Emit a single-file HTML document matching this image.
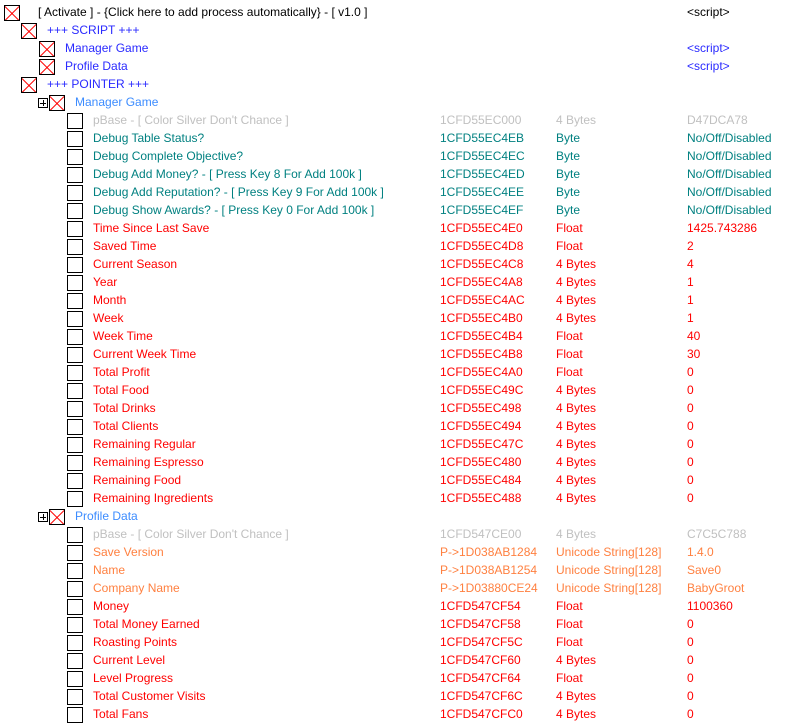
<!DOCTYPE html>
<html><head><meta charset="utf-8"><style>
body{margin:0;width:787px;height:722px;background:#fff;font-family:"Liberation Sans",sans-serif;font-size:12px;overflow:hidden;position:relative}
.r{position:absolute;left:0;width:787px;height:18px;line-height:18px;white-space:nowrap}
.r span{position:absolute;top:0}
.cb{position:absolute;top:2px;width:14px;height:14px;border:1px solid #000;background:#fff;box-sizing:content-box}
.x{position:absolute;top:2px;width:14px;height:14px;border:1px solid #000;box-sizing:content-box;overflow:hidden}
.x:before,.x:after{content:"";position:absolute;left:-3px;top:7px;width:20px;height:1px;background:#f00;transform:rotate(45deg)}
.x:after{transform:rotate(-45deg)}
.pl{position:absolute;top:5px;width:8px;height:8px;border:1px solid #000;}
.pl:before{content:"";position:absolute;left:1px;top:4px;width:6px;height:1px;background:#000}
.pl:after{content:"";position:absolute;left:3.5px;top:1px;width:1px;height:6px;background:#000}
.a{left:440px}.t{left:556px}.v{left:687px}.n{left:93px}
.s{color:#c0c0c0}.g{color:#008080}.red{color:#ff0000}.o{color:#ff8040}
</style></head><body>
<div class="r" style="top:3px"><div class="x" style="left:4px"></div><span style="left:38px">[ Activate ] - {Click here to add process automatically} - [ v1.0 ]</span><span class="v">&lt;script&gt;</span></div>
<div class="r" style="top:21px;color:#2a2aff"><div class="x" style="left:21px"></div><span style="left:47px">+++ SCRIPT +++</span></div>
<div class="r" style="top:39px;color:#2a2aff"><div class="x" style="left:39px"></div><span style="left:65px">Manager Game</span><span class="v">&lt;script&gt;</span></div>
<div class="r" style="top:57px;color:#2a2aff"><div class="x" style="left:39px"></div><span style="left:65px">Profile Data</span><span class="v">&lt;script&gt;</span></div>
<div class="r" style="top:75px;color:#2a2aff"><div class="x" style="left:21px"></div><span style="left:47px">+++ POINTER +++</span></div>
<div class="r" style="top:93px;color:#3c8cff"><div class="pl" style="left:38px"></div><div class="x" style="left:49px"></div><span style="left:75px">Manager Game</span></div>
<div id="m"></div>
<script>
var rows=[
["s","pBase - [ Color Silver Don't Chance ]","1CFD55EC000","4 Bytes","D47DCA78"],
["g","Debug Table Status?","1CFD55EC4EB","Byte","No/Off/Disabled"],
["g","Debug Complete Objective?","1CFD55EC4EC","Byte","No/Off/Disabled"],
["g","Debug Add Money? - [ Press Key 8 For Add 100k ]","1CFD55EC4ED","Byte","No/Off/Disabled"],
["g","Debug Add Reputation? - [ Press Key 9 For Add 100k ]","1CFD55EC4EE","Byte","No/Off/Disabled"],
["g","Debug Show Awards? - [ Press Key 0 For Add 100k ]","1CFD55EC4EF","Byte","No/Off/Disabled"],
["red","Time Since Last Save","1CFD55EC4E0","Float","1425.743286"],
["red","Saved Time","1CFD55EC4D8","Float","2"],
["red","Current Season","1CFD55EC4C8","4 Bytes","4"],
["red","Year","1CFD55EC4A8","4 Bytes","1"],
["red","Month","1CFD55EC4AC","4 Bytes","1"],
["red","Week","1CFD55EC4B0","4 Bytes","1"],
["red","Week Time","1CFD55EC4B4","Float","40"],
["red","Current Week Time","1CFD55EC4B8","Float","30"],
["red","Total Profit","1CFD55EC4A0","Float","0"],
["red","Total Food","1CFD55EC49C","4 Bytes","0"],
["red","Total Drinks","1CFD55EC498","4 Bytes","0"],
["red","Total Clients","1CFD55EC494","4 Bytes","0"],
["red","Remaining Regular","1CFD55EC47C","4 Bytes","0"],
["red","Remaining Espresso","1CFD55EC480","4 Bytes","0"],
["red","Remaining Food","1CFD55EC484","4 Bytes","0"],
["red","Remaining Ingredients","1CFD55EC488","4 Bytes","0"],
null,
["s","pBase - [ Color Silver Don't Chance ]","1CFD547CE00","4 Bytes","C7C5C788"],
["o","Save Version","P->1D038AB1284","Unicode String[128]","1.4.0"],
["o","Name","P->1D038AB1254","Unicode String[128]","Save0"],
["o","Company Name","P->1D03880CE24","Unicode String[128]","BabyGroot"],
["red","Money","1CFD547CF54","Float","1100360"],
["red","Total Money Earned","1CFD547CF58","Float","0"],
["red","Roasting Points","1CFD547CF5C","Float","0"],
["red","Current Level","1CFD547CF60","4 Bytes","0"],
["red","Level Progress","1CFD547CF64","Float","0"],
["red","Total Customer Visits","1CFD547CF6C","4 Bytes","0"],
["red","Total Fans","1CFD547CFC0","4 Bytes","0"]];
var h="";
rows.forEach(function(r,i){var top=111+18*i;
if(!r){h+='<div class="r" style="top:'+top+'px;color:#3c8cff"><div class="pl" style="left:38px"></div><div class="x" style="left:49px"></div><span style="left:75px">Profile Data</span></div>';return;}
h+='<div class="r '+r[0]+'" style="top:'+top+'px"><div class="cb" style="left:67px"></div><span class="n">'+r[1]+'</span><span class="a">'+r[2]+'</span><span class="t">'+r[3]+'</span><span class="v">'+r[4]+'</span></div>';});
document.getElementById("m").outerHTML=h;
</script>
</body></html>
